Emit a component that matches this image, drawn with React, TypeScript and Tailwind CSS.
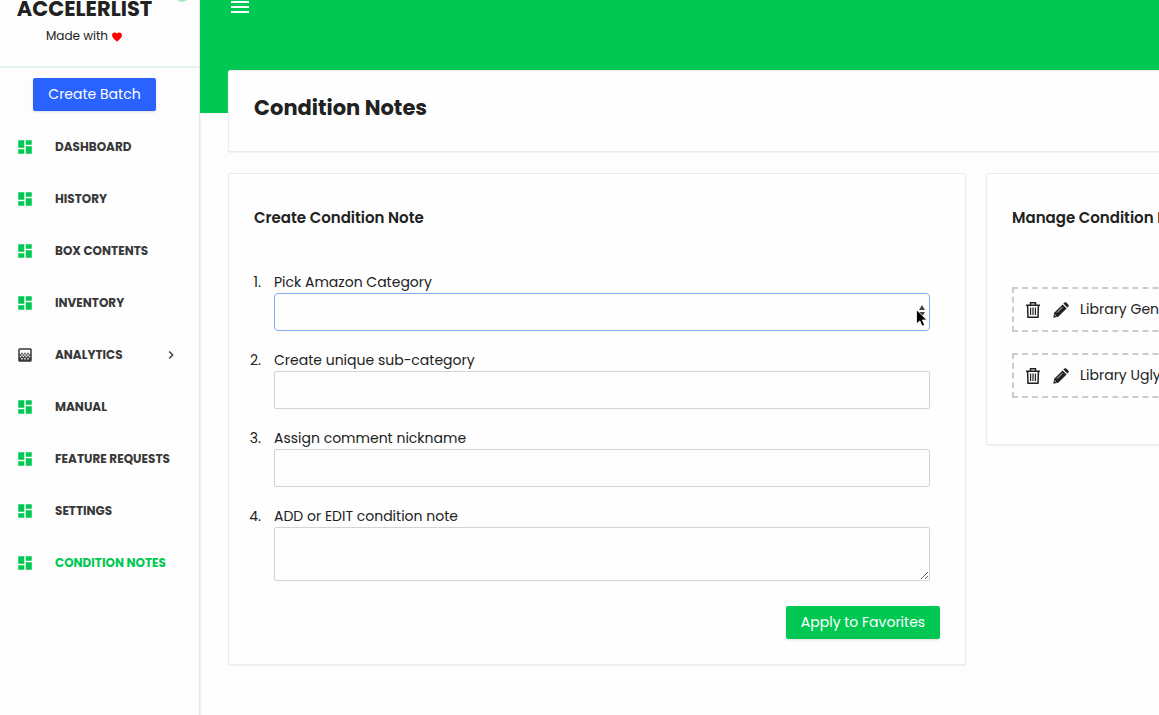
import React, { useState } from "react";
import { MdDashboard, MdGradient, MdMenu, MdChevronRight, MdFavorite } from "react-icons/md";

const NAV = [
  "Dashboard",
  "History",
  "Box Contents",
  "Inventory",
  "Analytics",
  "Manual",
  "Feature Requests",
  "Settings",
  "Condition Notes",
];

const NOTES = ["Library General", "Library Ugly"];

const TrashIcon: React.FC = () => (
  <svg viewBox="0 0 14 16" className="h-4 w-3.5" fill="none" stroke="currentColor" strokeWidth="1.5">
    <path d="M0 3.2h14M4.5 3V.8h5V3M1.6 3.4l.4 11.8h10l.4-11.8" />
    <path d="M4.6 5.5v7.5M7 5.5v7.5M9.4 5.5v7.5" strokeWidth="1.2" />
  </svg>
);

const PencilIcon: React.FC = () => (
  <svg viewBox="0 0 16 16" className="size-4" fill="currentColor">
    <path d="M9.6 2.4l4 4-8.4 8.4-4.9.9.9-4.9z" />
    <path d="M10.4 1.6L11.5.6q.9-.8 1.8 0l2.1 2.1q.8.9 0 1.8l-1.1 1.1z" />
    <path d="M4 10.6l5.4-5.4M1.5 12.6l1.8 1.8" stroke="#fefefe" strokeWidth=".8" />
  </svg>
);

const Sidebar: React.FC = () => (
  <aside className="flex w-[200px] shrink-0 flex-col border-r border-[#e6e6e6] shadow-[1px_0_1px_#f2f2f2]">
    <div className="relative flex h-[68px] flex-col items-center overflow-hidden border-b-2 border-[#e3f5e9] pr-[30px]">
      <div className="-mt-[3px] text-[21px] leading-6 font-bold">ACCELERLIST</div>
      <div className="mt-[7px] flex items-center gap-[3px] text-[12px] leading-4">
        Made with <MdFavorite className="mt-0.5 size-3 text-[#ff0000]" />
      </div>
      <span className="absolute -top-3 right-[10px] size-3.5 rounded-full bg-[#a5e8bf]" />
    </div>
    <button className="mt-2.5 ml-[33px] h-[33px] w-[123px] rounded-xs bg-[#2962ff] text-[14px] text-white shadow-sm">
      Create Batch
    </button>
    <nav className="mt-2.5">
      <ul>
        {NAV.map((name) => (
          <li key={name}>
            <a
              href="#"
              className={`flex h-[52px] items-center pr-5 pl-4 text-[12px] font-bold uppercase ${
                name === "Condition Notes" ? "text-[#00c853]" : "text-[#383838]"
              }`}
            >
              {name === "Analytics" ? (
                <MdGradient className="mr-[21px] size-[18px]" />
              ) : (
                <MdDashboard className="mr-[21px] size-[18px] text-[#00c853]" />
              )}
              {name}
              {name === "Analytics" && <MdChevronRight className="ml-auto size-4" />}
            </a>
          </li>
        ))}
      </ul>
    </nav>
  </aside>
);

type FieldProps = {
  no: number;
  id: string;
  label: string;
  children: React.ReactNode;
};

const Field: React.FC<FieldProps> = ({ no, id, label, children }) => (
  <li className="flex gap-[13px]">
    <span className="w-[15px] text-right leading-[22px]">{no}.</span>
    <div className="flex min-w-0 flex-1 flex-col">
      <label htmlFor={id} className="leading-[22px]">{label}</label>
      {children}
    </div>
  </li>
);

const NoteForm: React.FC = () => {
  const [category, setCategory] = useState<string>("");
  const [sub, setSub] = useState<string>("");
  const [nickname, setNickname] = useState<string>("");
  const [note, setNote] = useState<string>("");

  return (
    <section className="col-span-8 rounded-xs border border-[#ebebeb] bg-[#fefefe] p-[25px] shadow-[0_1px_1px_#f0f0f0]">
      <h2 className="mt-[7px] text-[15px] leading-6 font-semibold">Create Condition Note</h2>
      <ol className="mt-[41px] -ml-2 space-y-[18px] pr-2.5 text-[14px]">
        <Field no={1} id="category" label="Pick Amazon Category">
          <div className="relative">
            <select
              id="category"
              value={category}
              onChange={(e) => setCategory(e.target.value)}
              className="block h-[38px] w-full appearance-none rounded-sm border border-[#80aaf5] px-2 outline-none"
            >
              <option value=""></option>
              <option value="books">Books</option>
            </select>
            <svg viewBox="0 0 6 12" className="pointer-events-none absolute top-3 right-[5px] h-3 w-1.5 fill-[#444]">
              <path d="M0 5L3 0l3 5zM0 7h6l-3 5z" />
            </svg>
            <svg viewBox="0 0 12 18" className="pointer-events-none absolute top-4 right-0.5 h-[18px] w-3">
              <path d="M.5 .8v14l3.3-2.9 2.2 5.2 2.6-1.1-2.2-5h4.4z" fill="#000" stroke="#fff" strokeWidth=".8" />
            </svg>
          </div>
        </Field>
        <Field no={2} id="sub" label="Create unique sub-category">
          <input
            id="sub"
            value={sub}
            onChange={(e) => setSub(e.target.value)}
            className="h-[38px] rounded-xs border border-[#d4d4d4] px-3 outline-none"
          />
        </Field>
        <Field no={3} id="nickname" label="Assign comment nickname">
          <input
            id="nickname"
            value={nickname}
            onChange={(e) => setNickname(e.target.value)}
            className="h-[38px] rounded-xs border border-[#d4d4d4] px-3 outline-none"
          />
        </Field>
        <Field no={4} id="note" label="ADD or EDIT condition note">
          <textarea
            id="note"
            value={note}
            onChange={(e) => setNote(e.target.value)}
            className="h-[54px] resize rounded-xs border border-[#d4d4d4] px-3 outline-none"
          />
        </Field>
      </ol>
      <div className="mt-[25px] flex justify-end">
        <button className="h-[33px] w-[154px] rounded-xs bg-[#00c853] text-[14px] text-white shadow-sm">
          Apply to Favorites
        </button>
      </div>
    </section>
  );
};

const NoteList: React.FC = () => (
  <section className="col-span-4 self-start rounded-xs border border-[#ebebeb] bg-[#fefefe] p-[25px] pb-[46px] shadow-[0_1px_1px_#f0f0f0]">
    <h2 className="mt-[7px] text-[15px] leading-6 font-semibold">Manage Condition Notes</h2>
    <ul className="mt-[57px] space-y-[21px] text-[14px]">
      {NOTES.map((name) => (
        <li key={name} className="flex h-[45px] items-center border-2 border-dashed border-[#cccccc] pl-3">
          <button aria-label="Delete"><TrashIcon /></button>
          <button aria-label="Edit" className="mr-[11px] ml-[13px]"><PencilIcon /></button>
          {name}
        </li>
      ))}
    </ul>
  </section>
);

const App: React.FC = () => (
  <div className="flex min-h-screen overflow-hidden bg-[#fdfdfd] font-['Poppins','Inter',sans-serif] text-[#212121]">
    <Sidebar />
    <div className="min-w-0 flex-1">
      <header className="h-[113px] bg-[#00c853] pl-7">
        <button aria-label="Menu" className="block text-white">
          <MdMenu className="-mt-[5px] size-6" />
        </button>
      </header>
      <main className="-mt-[43px] min-w-[1165px] pr-5 pl-7">
        <div className="rounded-xs border border-[#ebebeb] bg-[#fefefe] px-[25px] py-[21px] shadow-[0_1px_1px_#f0f0f0]">
          <h1 className="h-[38px] text-[21px] leading-8 font-bold">Condition Notes</h1>
        </div>
        <div className="mt-[21px] grid grid-cols-12 gap-5">
          <NoteForm />
          <NoteList />
        </div>
      </main>
    </div>
  </div>
);

export default App;
